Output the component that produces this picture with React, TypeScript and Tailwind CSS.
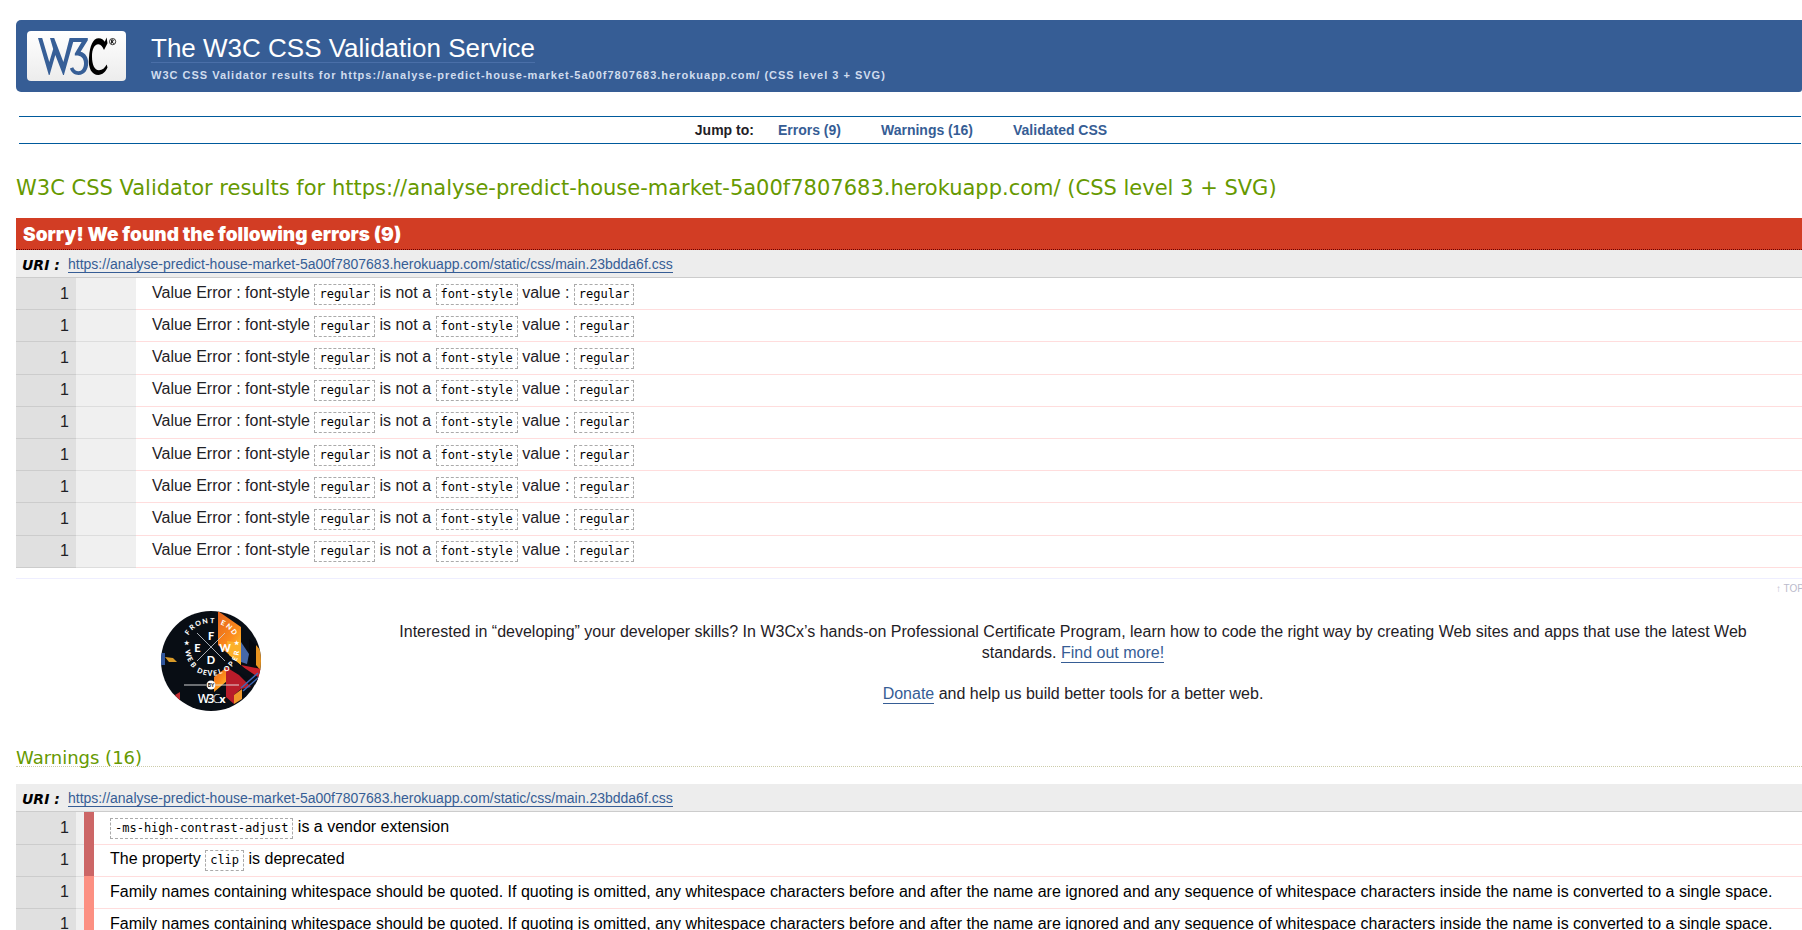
import type { ReactNode } from "react";

const SITE = "https://analyse-predict-house-market-5a00f7807683.herokuapp.com/";
const SHEET = SITE + "static/css/main.23bdda6f.css";
const RESULT_TITLE = `W3C CSS Validator results for ${SITE} (CSS level 3 + SVG)`;

function Logo() {
  return (
    <svg viewBox="0 0 99 50" className="h-[50px] w-[99px]" role="img" aria-label="W3C">
      <defs>
        <linearGradient id="plate" x1="0" y1="0" x2="0" y2="1">
          <stop offset="0" stopColor="#ffffff" />
          <stop offset="1" stopColor="#ececec" />
        </linearGradient>
      </defs>
      <rect width="99" height="50" rx="4" fill="url(#plate)" />
      <path d="M11 7H15.200L22.300 31 26.200 18 23 7H27.200L36.400 31 42.600 7H60.800V9.300L53.600 20.800C58.400 22 61.200 26.400 61.200 32 61.200 39 57.200 44 51.600 44 47.400 44 44.300 41.600 42.900 37.600L46.200 36.200C47.200 38.600 49 40.200 51.500 40.200 54.800 40.200 57 36.800 57 32.200 57 27 53.900 24.400 49.200 24.400H47.800V22.400L54.600 11H46.200L36.900 44H36.100L28.300 24 22.600 44H21.800Z" fill="#375f97" />
      <path d="M79.600 6.600 80.500 12.300 77 19C75.600 15.800 74 13.300 71.300 13.300 67.300 13.300 65 18.500 65 25.500 65 33.500 67.500 39.300 72 39.300 75.300 39.300 77.900 37.100 79.700 33.600L80.500 36.600C78.600 40.900 75.500 44 71.300 44 65 44 60.900 37.500 62 26.500 62.800 14.500 66 7.200 71.700 7.200 74.500 7.200 76.600 8.800 77.800 10.800Z" fill="#000" />
      <circle cx="85.600" cy="10.600" r="3.100" fill="none" stroke="#000" strokeWidth="0.800" />
      <path d="M84.600 12.600V8.900H85.900Q87.300 9.900 84.800 10.800L86.800 12.600" fill="none" stroke="#000" strokeWidth="0.900" />
    </svg>
  );
}

function Badge() {
  return (
    <svg viewBox="0 0 100 100" className="size-[100px]" role="img" aria-label="Front End Web Developer by W3Cx">
      <defs>
        <clipPath id="disc"><circle cx="50" cy="50" r="50" /></clipPath>
        <linearGradient id="flame" x1="0" y1="0" x2="0.600" y2="1">
          <stop offset="0" stopColor="#e2601c" />
          <stop offset="0.600" stopColor="#fb8a1c" />
          <stop offset="1" stopColor="#fdc02c" />
        </linearGradient>
      </defs>
      <g clipPath="url(#disc)">
        <rect width="100" height="100" fill="#080d14" />
        <path d="M57 0 80 16V54L57 34Z" fill="url(#flame)" />
        <path d="M66 30 80 32V54L68 44Z" fill="#fcb12a" />
        <path d="M80 31 88 43 86 53 80 51Z" fill="#4668a8" />
        <path d="M88 28 97 36V70L88 52Z" fill="#05080d" />
        <path d="M95 34 100 40V60L95 54Z" fill="#e89420" />
        <path d="M0 42 4 42V54H0Z" fill="#30569c" />
        <path d="M4 46 12 47 16 51 8 51Z" fill="#d89a28" />
        <path d="M14 84 19 81V92Z" fill="#c02a30" />
        <path d="M53 66 66 56V70L53 81Z" fill="url(#flame)" />
        <path d="M80 54 100 58V74Z" fill="#c8202c" />
        <path d="M65 56 78 64 90 76 80 78 73 84V93L65 86Z" fill="#b81c2a" />
        <path d="M73 50 100 68V76L72 57Z" fill="#0a0e16" />
        <path d="M73 84 81 78V88L73 93Z" fill="#f0962a" />
        <path d="M80 77 97 62M82 80 98 66" stroke="#3e68b8" strokeWidth="1.500" />
        <path d="M36 22 64 50M64 22 36 50" stroke="#cfd3da" strokeWidth="0.800" />
        <path d="M23 74H45M55 74H78" stroke="#e8e8e8" strokeWidth="0.900" />
        <circle cx="50" cy="74" r="4.500" fill="#fff" />
        <g fill="#fff" fontFamily="Lato, 'Open Sans', sans-serif" fontWeight="900" textAnchor="middle">
          <text x="50" y="28.500" fontSize="11">F</text>
          <text x="36.500" y="40.500" fontSize="11">E</text>
          <text x="64" y="40.500" fontSize="11">W</text>
          <text x="50" y="53" fontSize="11">D</text>
          <text x="50" y="76" fontSize="5" fill="#111">BY</text>
          <g fontSize="12" fontWeight="700" fontFamily="'Open Sans', sans-serif">
            <text x="42.500" y="92" fontWeight="600">W</text>
            <text x="50" y="92" fontWeight="600">3</text>
            <text x="55.500" y="92" fontWeight="300">C</text>
            <text x="61.500" y="92" fontSize="11">x</text>
          </g>
          {[
            ["F", 28.500, 23, -52], ["R", 32.500, 18, -38], ["O", 38, 14.500, -25], ["N", 44.500, 12.500, -10], ["T", 51, 12, 3],
            ["E", 61, 14, 24], ["N", 66.500, 17.500, 40], ["D", 71, 22.500, 54],
            ["W", 25, 43, 76], ["E", 27, 49.500, 62], ["B", 30.500, 55.500, 48],
            ["D", 38, 62, 24], ["E", 43.500, 64, 12], ["V", 49, 65, 0], ["E", 54.500, 64.500, -8], ["L", 60, 62.500, -20],
            ["O", 67, 59.500, -35], ["P", 72, 54.500, -50], ["E", 76, 49, -65], ["R", 78, 42.500, -80],
          ].map(([ch, x, y, r], i) => (
            <text key={i} fontSize="7" transform={`translate(${x} ${y}) rotate(${r})`}>{ch}</text>
          ))}
          <text x="25" y="34" fontSize="6">★</text>
          <text x="75" y="34" fontSize="6">★</text>
        </g>
      </g>
    </svg>
  );
}

function Code({ children }: { children: ReactNode }) {
  return (
    <code className="inline-block border border-dashed border-[#aaa] px-1 font-['DejaVu_Sans_Mono',monospace] text-xs leading-[19px] text-black">
      {children}
    </code>
  );
}

function SheetLine() {
  return (
    <h4 className="flex h-7 items-center border-b border-[#ccc] bg-[#ededed] pl-[6px] pt-[2px] text-sm">
      <span className="w-[46px] font-['DejaVu_Sans',sans-serif] font-bold italic text-black">URI :</span>
      <a href={SHEET} className="border-b border-[#365d95] leading-[15px] text-[#365d95]">{SHEET}</a>
    </h4>
  );
}

function TextLink({ href, children }: { href: string; children: ReactNode }) {
  return (
    <a href={href} className="inline-block border-b border-[#365d95] leading-[18px] text-[#365d95]">{children}</a>
  );
}

function ErrorTable() {
  return (
    <table className="h-[290px] w-full border-collapse">
      <tbody>
        {Array.from({ length: 9 }, (_, i) => (
          <tr key={i}>
            <td className="w-[60px] border-b border-[#ccc] bg-[#e0e0e0] pr-[7px] text-right">1</td>
            <td className="w-[60px] border-b border-[#ddd] bg-[#f0f0f0]" />
            <td className="border-b border-[#fdd] pl-4 leading-5">
              Value Error : font-style <Code>regular</Code> is not a <Code>font-style</Code> value : <Code>regular</Code>
            </td>
          </tr>
        ))}
      </tbody>
    </table>
  );
}

const FAMILY_NOTE =
  "Family names containing whitespace should be quoted. If quoting is omitted, any whitespace characters before and after the name are ignored and any sequence of whitespace characters inside the name is converted to a single space.";

const WARNINGS: { level: string; message: ReactNode }[] = [
  { level: "bg-[#cc6666]", message: <><Code>-ms-high-contrast-adjust</Code> is a vendor extension</> },
  { level: "bg-[#cc6666]", message: <>The property <Code>clip</Code> is deprecated</> },
  { level: "bg-[#fc9082]", message: FAMILY_NOTE },
  { level: "bg-[#fc9082]", message: FAMILY_NOTE },
];

function WarningTable() {
  return (
    <table className="w-full border-collapse text-black">
      <tbody>
        {WARNINGS.map((w, i) => (
          <tr key={i} className="h-8">
            <td className="w-[60px] border-b border-[#ccc] bg-[#e0e0e0] pr-[7px] text-right text-[#1f2126]">1</td>
            <td className="w-2 border-b border-[#ddd] bg-[#f0f0f0] p-0" />
            <td className={`w-[10px] p-0 ${w.level}`} />
            <td className="border-b border-[#fdd] pl-4 leading-5">{w.message}</td>
          </tr>
        ))}
      </tbody>
    </table>
  );
}

export default function App() {
  return (
    <div className="h-screen overflow-hidden bg-white pl-4 pt-5 font-['Liberation_Sans',Arial,sans-serif] text-base text-[#1f2126]">
      <header className="flex h-[72px] items-start gap-[25px] rounded-l-[5px] rounded-br-[3px] bg-[#365d95] pl-[11px] pt-[11px]">
        <a href="https://www.w3.org/" className="shrink-0"><Logo /></a>
        <div className="flex flex-col items-start">
          <h1 className="border-b border-[#4a6fa8] pt-[3px] text-[26px] leading-7 text-white">
            <a href="#top">The W3C CSS Validation Service</a>
          </h1>
          <p className="pt-[5px] text-[11px] font-bold leading-[14px] tracking-[1px] text-[#d0dcee]">{RESULT_TITLE}</p>
        </div>
      </header>

      <nav className="ml-[3px] mr-px mt-6 flex h-7 items-center justify-center border-y border-[#005a9c] pr-[18px] text-sm font-bold">
        <span className="mr-6">Jump to:</span>
        <div className="flex gap-10 text-[#365d95]">
          <a href="#errors">Errors (9)</a>
          <a href="#warnings">Warnings (16)</a>
          <a href="#css">Validated CSS</a>
        </div>
      </nav>

      <h2 className="mt-[30px] whitespace-nowrap font-['DejaVu_Sans',sans-serif] text-[21px] leading-7 text-[#690]">{RESULT_TITLE}</h2>

      <section id="errors" className="mt-4">
        <h3 className="h-8 border-b border-dotted border-[#600] bg-[#d23d24] pl-[7px] font-['Inter',sans-serif] text-[19px] font-black leading-[33px] text-white">
          Sorry! We found the following errors (9)
        </h3>
        <SheetLine />
        <ErrorTable />
      </section>

      <div className="mt-[10px] border-t border-[#eef]">
        <p className="-mr-[2px] text-right text-[10px] leading-5 text-[#bbc]"><a href="#top">↑ TOP</a></p>
      </div>

      <section className="flex items-start pl-[145px] pr-[53px] pt-3">
        <Badge />
        <div className="ml-[136px] flex-1 pt-[10px] text-center leading-[21px]">
          <p>
            Interested in “developing” your developer skills? In W3Cx’s hands-on Professional Certificate Program, learn how to code the right way by creating Web sites and apps that use the latest Web standards.{" "}
            <TextLink href="#more">Find out more!</TextLink>
          </p>
          <p className="mt-5">
            <TextLink href="#donate">Donate</TextLink> and help us build better tools for a better web.
          </p>
        </div>
      </section>

      <section id="warnings" className="mt-[39px]">
        <h3 className="mb-[17px] border-b border-dotted border-[#cca] font-['DejaVu_Sans',sans-serif] text-lg leading-4 text-[#690]">Warnings (16)</h3>
        <SheetLine />
        <WarningTable />
      </section>
    </div>
  );
}
